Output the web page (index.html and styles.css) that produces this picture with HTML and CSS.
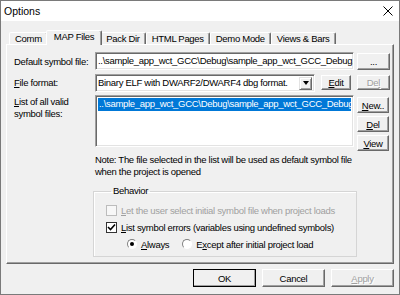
FILE: index.html
```html
<!DOCTYPE html>
<html lang="en">
<head>
    <meta charset="UTF-8">
    <title>Options</title>
    <link rel="stylesheet" href="styles.css">
</head>
<body>

<div class="window">
  <div class="titlebar">
    <span class="title">Options</span>
    <svg class="close" width="10" height="10" viewBox="0 0 10 10">
      <path d="M0.5 0.5 L9.5 9.5 M9.5 0.5 L0.5 9.5" stroke="#000" stroke-width="1" fill="none" />
    </svg>
  </div>

  <div class="tabs">
    <div class="tab">Comm</div>
    <div class="tab active">MAP Files</div>
    <div class="tab">Pack Dir</div>
    <div class="tab">HTML Pages</div>
    <div class="tab">Demo Mode</div>
    <div class="tab">Views &amp; Bars</div>
  </div>

  <div class="panel">
    <div class="form">
      <label class="label">Default symbol file:</label>
      <div class="field">..\sample_app_wct_GCC\Debug\sample_app_wct_GCC_Debug.elf</div>
      <button class="btn">...</button>

      <label class="label"><u>F</u>ile format:</label>
      <div class="format-row">
        <div class="field select">
          <span class="select-text">Binary ELF with DWARF2/DWARF4 dbg format.</span>
          <span class="drop"><span class="arrow"></span></span>
        </div>
        <button class="btn small"><u>E</u>dit</button>
      </div>
      <button class="btn small disabled">De<u>l</u></button>

      <label class="label list-label"><u>L</u>ist of all valid<br>symbol files:</label>
      <div class="listbox">
        <div class="list-item selected">..\sample_app_wct_GCC\Debug\sample_app_wct_GCC_Debug.elf</div>
      </div>
      <div class="side-buttons">
        <button class="btn side"><u>N</u>ew..</button>
        <button class="btn side"><u>D</u>el</button>
        <button class="btn side"><u>V</u>iew</button>
      </div>

      <p class="note">Note: The file selected in the list will be used as default symbol file<br>when the project is opened</p>

      <fieldset class="group">
        <legend>Behavior</legend>
        <div class="option disabled">
          <span class="check"></span>
          <span><u>L</u>et the user select initial symbol file when project loads</span>
        </div>
        <div class="option">
          <span class="check checked">
            <svg width="9" height="9" viewBox="0 0 9 9"><path d="M1 4 L3.5 6.5 L8 1.5" stroke="#000" stroke-width="1.6" fill="none" /></svg>
          </span>
          <span><u>L</u>ist symbol errors (variables using undefined symbols)</span>
        </div>
        <div class="option radios">
          <span class="radio on"></span>
          <span class="radio-label"><u>A</u>lways</span>
          <span class="radio"></span>
          <span>E<u>x</u>cept after initial project load</span>
        </div>
      </fieldset>
    </div>
  </div>

  <div class="footer">
    <button class="btn wide default">OK</button>
    <button class="btn wide">Cancel</button>
    <button class="btn wide disabled"><u>A</u>pply</button>
  </div>
</div>

</body>
</html>
```

FILE: styles.css
```css
* {
  box-sizing: border-box;
}

body {
  margin: 0;
  font-family: "Liberation Sans", Arial, sans-serif;
  font-size: 9.5px;
  letter-spacing: -0.3px;
  color: #000;
  background: #fff;
}

.window {
  width: 400px;
  height: 295px;
  border: 1px solid #7a7a7a;
  background: #f0f0f0;
  display: flex;
  flex-direction: column;
}

.titlebar {
  height: 20px;
  flex: none;
  background: #fff;
  display: flex;
  align-items: center;
  justify-content: space-between;
  padding: 0 6px 0 3px;
}

.title {
  font-size: 10.5px;
  letter-spacing: 0;
}

/* tabs */
.tabs {
  display: flex;
  align-items: flex-end;
  height: 14px;
  margin: 9px 5px 0;
  padding-left: 3px;
  position: relative;
  z-index: 1;
}

.tab {
  height: 12px;
  padding: 0 5px;
  line-height: 11px;
  border: 1px solid;
  border-bottom: none;
  border-color: #fff #696969 transparent #fff;
  border-radius: 2px 2px 0 0;
  box-shadow: inset -1px 0 #a0a0a0;
  background: #f0f0f0;
}

.tab.active {
  height: 15px;
  margin: 0 -2px -1px;
  padding: 0 7px;
  line-height: 11px;
  position: relative;
}

/* main panel */
.panel {
  flex: none;
  height: 220px;
  margin: 0 5px;
  border: 1px solid;
  border-color: #fff #696969 #696969 #fff;
  box-shadow: inset -1px -1px #a0a0a0;
  padding: 7px 5px 0 7px;
}

.form {
  display: grid;
  grid-template-columns: 78px 259px 33px;
  grid-template-rows: 18px 19px 56px auto auto;
  column-gap: 3px;
  row-gap: 3px;
  align-items: center;
}

.label {
  white-space: nowrap;
}

.list-label {
  align-self: start;
  line-height: 12px;
  padding-top: 1px;
}

.field {
  height: 18px;
  background: #fff;
  border: 1px solid;
  border-color: #a0a0a0 #fff #fff #a0a0a0;
  box-shadow: inset 1px 1px #696969, inset -1px -1px #e3e3e3;
  padding: 0 2px;
  line-height: 16px;
  white-space: nowrap;
  overflow: hidden;
}

.format-row {
  display: flex;
  gap: 6px;
  align-items: center;
}

.select {
  width: 220px;
  display: flex;
  padding: 2px 2px 2px 2px;
  line-height: 12px;
}

.select-text {
  flex: 1;
  overflow: hidden;
}

.drop {
  width: 13px;
  height: 13px;
  background: #f0f0f0;
  border: 1px solid;
  border-color: #e3e3e3 #696969 #696969 #e3e3e3;
  box-shadow: inset 1px 1px #fff, inset -1px -1px #a0a0a0;
  display: flex;
  align-items: center;
  justify-content: center;
}

.arrow {
  width: 0;
  height: 0;
  border-left: 3.5px solid transparent;
  border-right: 3.5px solid transparent;
  border-top: 4px solid #000;
}

.listbox {
  height: 52px;
  align-self: start;
  background: #fff;
  border: 1px solid;
  border-color: #a0a0a0 #fff #fff #a0a0a0;
  box-shadow: inset 1px 1px #696969, inset -1px -1px #e3e3e3;
  padding: 2px 2px;
  overflow: hidden;
}

.list-item {
  height: 13px;
  line-height: 12px;
  padding: 0 1px;
  white-space: nowrap;
  overflow: hidden;
}

.list-item.selected {
  background: #0078d7;
  color: #fff;
}

.side-buttons {
  align-self: start;
  display: flex;
  flex-direction: column;
  gap: 3px;
  padding-top: 2px;
}

/* buttons */
.btn {
  height: 17px;
  padding: 0;
  font: inherit;
  letter-spacing: inherit;
  color: #000;
  background: #f0f0f0;
  border: 1px solid;
  border-color: #fff #696969 #696969 #fff;
  box-shadow: inset -1px -1px #a0a0a0;
  line-height: 13px;
}

.btn.small {
  width: 30px;
  height: 15px;
}

.btn.side {
  width: 32px;
  height: 16px;
}

.form > .btn.disabled,
.form > .btn:first-of-type {
  width: 33px;
}

.btn.disabled {
  color: #a0a0a0;
  text-shadow: 1px 1px #fff;
}

.note {
  grid-column: 2 / 4;
  margin: 0;
  line-height: 12px;
  white-space: nowrap;
}

/* behavior group */
.group {
  grid-column: 2 / 4;
  width: 264px;
  margin: 4px 0 0 -2px;
  padding: 7px 0 6px 12px;
  border: 1px solid #d5d5d5;
  box-shadow: inset 1px 1px #fff;
}

.group legend {
  margin-left: 5px;
  padding: 0 2px;
  line-height: 12px;
}

.option {
  display: flex;
  align-items: center;
  gap: 4px;
  height: 12px;
  white-space: nowrap;
}

.option + .option {
  margin-top: 5px;
}

.option.disabled {
  color: #a0a0a0;
}

.check {
  width: 11px;
  height: 11px;
  border: 1px solid #333;
  background: #fff;
  display: flex;
  align-items: center;
  justify-content: center;
}

.option.disabled .check {
  border-color: #bcbcbc;
  background: #f7f7f7;
}

.radios {
  padding-left: 21px;
}

.radio {
  width: 10px;
  height: 10px;
  border-radius: 50%;
  border: 1px solid;
  border-color: #808080 #fff #fff #808080;
  background: #fff;
  display: flex;
  align-items: center;
  justify-content: center;
}

.radio.on::after {
  content: "";
  width: 4px;
  height: 4px;
  border-radius: 50%;
  background: #000;
}

.radio-label {
  margin-right: 9px;
}

/* bottom buttons */
.footer {
  display: flex;
  justify-content: flex-end;
  gap: 6px;
  padding: 5px 5px 0;
}

.btn.wide {
  width: 63px;
  height: 18px;
}

.btn.default {
  outline: 1px solid #000;
  outline-offset: -1px;
}
```
